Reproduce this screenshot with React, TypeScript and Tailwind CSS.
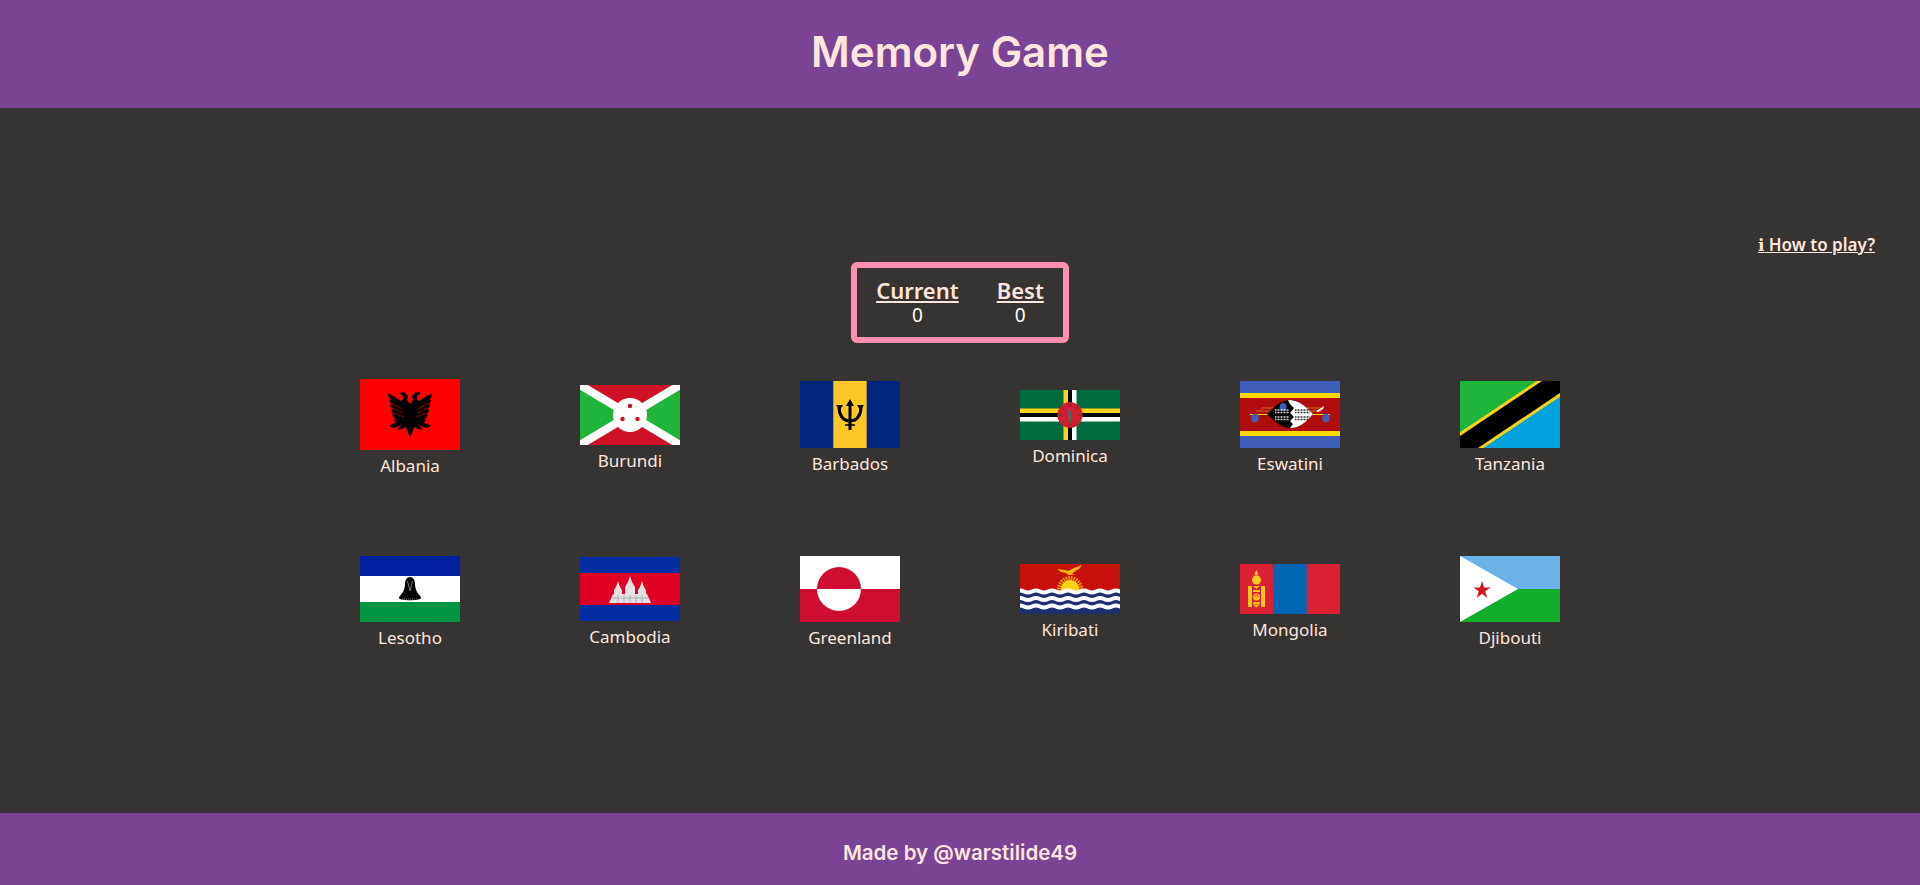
const titleFont = "font-['Inter',sans-serif]";

const eagleHalf =
  "M50 25L47 21L48 17L44 13L39 14L43 17L43 20L41 22L35 18L28 14L29 19L31 20L29 21L30 24L32 25L30 26L31 29L33 30L31 31L32 34L34 35L32 36L34 39L36 40L34 41L36 44L32 45L29 47L34 49L39 47L44 44L40 47L37 51L42 50L46 48L47 52L50 58Z";

function Albania() {
  return (
    <svg viewBox="0 0 100 71" className="block w-[100px] h-[71px]">
      <rect width="100" height="71" fill="#ff0000" />
      <path d={eagleHalf} fill="#000" />
      <path d={eagleHalf} fill="#000" transform="translate(100 0) scale(-1 1)" />
      <path
        d="M32 24L42 30M32 29L43 34M34 34L44 38M68 24L58 30M68 29L57 34M66 34L56 38"
        stroke="#c00000"
        strokeWidth=".8"
      />
    </svg>
  );
}

function Burundi() {
  return (
    <svg viewBox="0 0 100 60" className="block w-[100px] h-[60px]">
      <rect width="100" height="60" fill="#ce1126" />
      <path d="M0 0L50 30L0 60z" fill="#1eb53a" />
      <path d="M100 0L50 30L100 60z" fill="#1eb53a" />
      <path d="M0 0L100 60M100 0L0 60" stroke="#fff" strokeWidth="8" />
      <circle cx="50" cy="30" r="17" fill="#fff" />
      <circle cx="50" cy="21" r="2.200" fill="#ce1126" />
      <circle cx="42.500" cy="34" r="2.200" fill="#ce1126" />
      <circle cx="57.500" cy="34" r="2.200" fill="#ce1126" />
    </svg>
  );
}

function Barbados() {
  return (
    <svg viewBox="0 0 100 67" className="block w-[100px] h-[67px]">
      <rect width="100" height="67" fill="#00267f" />
      <rect x="33.300" width="33.400" height="67" fill="#ffc726" />
      <path d="M50 49V22" stroke="#000" strokeWidth="3" />
      <path d="M50 18l-4 7h8z" fill="#000" />
      <path d="M39 26C39 34 43 40 50 40C57 40 61 34 61 26" stroke="#000" strokeWidth="3" fill="none" />
      <path d="M36 24l7 0-3 5zM64 24l-7 0 3 5z" fill="#000" />
      <path d="M45 44h10" stroke="#000" strokeWidth="1.500" />
    </svg>
  );
}

function Dominica() {
  const dots = [
    [50, 15],
    [57, 18],
    [59.500, 25],
    [57, 32],
    [50, 35],
    [43, 32],
    [40.500, 25],
    [43, 18],
  ];
  return (
    <svg viewBox="0 0 100 50" className="block w-[100px] h-[50px]">
      <rect width="100" height="50" fill="#006b3f" />
      <rect y="18.500" width="100" height="4.500" fill="#fcd116" />
      <rect y="23" width="100" height="4" fill="#000" />
      <rect y="27" width="100" height="4.500" fill="#fff" />
      <rect x="43.500" width="4.500" height="50" fill="#fcd116" />
      <rect x="48" width="4" height="50" fill="#000" />
      <rect x="52" width="4.500" height="50" fill="#fff" />
      <ellipse cx="50" cy="25" rx="12.500" ry="13" fill="#d41c30" />
      <path d="M49 18c-1 3-1 8 0 11l1 0 0-11z" fill="#5a5ab0" />
      <path d="M50 20c2 3 2 9 1 13l-1 0z" fill="#2a7a40" />
      <g fill="#7a3a30">
        {dots.map(([cx, cy]) => (
          <circle key={`${cx}-${cy}`} cx={cx} cy={cy} r="1.300" />
        ))}
      </g>
    </svg>
  );
}

function Eswatini() {
  return (
    <svg viewBox="0 0 100 67" className="block w-[100px] h-[67px]">
      <rect width="100" height="67" fill="#3e5eb9" />
      <rect y="12" width="100" height="43" fill="#ffd900" />
      <rect y="17" width="100" height="33" fill="#b10c0c" />
      <path d="M10 33.500h80" stroke="#ffd900" strokeWidth="1" />
      <path d="M21 27h60M16 30h66" stroke="#d8700f" strokeWidth="1.200" />
      <path d="M27 33C35 25 42 19 50 19C60 19 66 26 73 33C66 41 60 47 50 47C42 47 35 41 27 33z" fill="#000" />
      <path d="M48 19C60 19 66 26 73 33C66 41 60 47 50 47L53 43L50 40L54 36L50 32L54 27L50 23z" fill="#fff" />
      <ellipse cx="43" cy="26" rx="3.500" ry="4" fill="#3e5eb9" />
      <path d="M35 29h14M35 31.500h14M35 36h14M35 38.500h14" stroke="#d8d8d8" strokeWidth="1.600" strokeDasharray="1 .5" />
      <path d="M55 29h15M55 31.500h15M55 36h15M55 38.500h15" stroke="#333" strokeWidth="1.600" strokeDasharray="1 .5" />
      <ellipse cx="15" cy="37" rx="3.800" ry="4.500" fill="#3e5eb9" />
      <ellipse cx="86" cy="37" rx="3.800" ry="4.500" fill="#3e5eb9" />
      <path d="M76 30l5-3 3-2-1 3-5 3z" fill="#fff" />
    </svg>
  );
}

function Tanzania() {
  return (
    <svg viewBox="0 0 100 67" className="block w-[100px] h-[67px]">
      <rect width="100" height="67" fill="#1eb53a" />
      <path d="M0 67L100 0V67z" fill="#00a3dd" />
      <path d="M-10 73.700L110 -6.700" stroke="#fcd116" strokeWidth="26" />
      <path d="M-10 73.700L110 -6.700" stroke="#000" strokeWidth="20" />
    </svg>
  );
}

function Lesotho() {
  return (
    <svg viewBox="0 0 100 66" className="block w-[100px] h-[66px]">
      <rect width="100" height="66" fill="#fff" />
      <rect width="100" height="20" fill="#00209f" />
      <rect y="46" width="100" height="20" fill="#009543" />
      <path d="M50 21c3 0 5 3 5 7 0 3 1 6 2 8 1 2 4 4 4 6 0 3-22 3-22 0 0-2 3-4 4-6 1-2 2-5 2-8 0-4 2-7 5-7z" fill="#000" />
      <path d="M47.500 25l2.500 10 2.500-10" stroke="#999" strokeWidth=".8" fill="none" />
      <path d="M42 43h16" stroke="#777" strokeWidth="1" strokeDasharray="1 1" />
    </svg>
  );
}

function Cambodia() {
  return (
    <svg viewBox="0 0 100 64" className="block w-[100px] h-[64px]">
      <rect width="100" height="64" fill="#032ea1" />
      <rect y="16" width="100" height="32" fill="#e00025" />
      <g fill="#e2e2e2">
        <path d="M38 24l2 6 2 3v5h-8v-5l2-3z" />
        <path d="M62 24l2 6 2 3v5h-8v-5l2-3z" />
        <path d="M50 19l2 6 3 5v8H45v-8l3-5z" />
        <path d="M33 37h34l4 9H29z" />
      </g>
      <path d="M38 38v8M50 38v8M62 38v8M44 38v8M56 38v8M32 41h36" stroke="#b0b0b0" strokeWidth="1" />
    </svg>
  );
}

function Greenland() {
  return (
    <svg viewBox="0 0 100 66" className="block w-[100px] h-[66px]">
      <rect width="100" height="33" fill="#fff" />
      <rect y="33" width="100" height="33" fill="#d00c33" />
      <path d="M17 33a22 22 0 0 1 44 0z" fill="#d00c33" />
      <path d="M17 33a22 22 0 0 0 44 0z" fill="#fff" />
    </svg>
  );
}

function Kiribati() {
  const waves = [27.500, 35, 42.500];
  return (
    <svg viewBox="0 0 100 50" className="block w-[100px] h-[50px]">
      <rect width="100" height="50" fill="#c8100b" />
      <circle cx="50" cy="25" r="10.500" fill="none" stroke="#f09a05" strokeWidth="5" strokeDasharray="1.500 1" />
      <circle cx="50" cy="25" r="9" fill="#fcd116" />
      <path d="M37 5l8 1 3 1 6-3 8-3-3 4-5 3-2 2 3 0-3 1-4 0-2-2-5-1z" fill="#f2b705" />
      <rect y="27" width="100" height="23" fill="#1d2f6f" />
      {waves.map((y) => (
        <path
          key={y}
          d={`M-4 ${y}q4-2 8 0t8 0 8 0 8 0 8 0 8 0 8 0 8 0 8 0 8 0 8 0 8 0 8 0 8 0`}
          stroke="#fff"
          strokeWidth="3.800"
          fill="none"
        />
      ))}
    </svg>
  );
}

function Mongolia() {
  return (
    <svg viewBox="0 0 100 50" className="block w-[100px] h-[50px]">
      <rect width="100" height="50" fill="#da2032" />
      <rect x="33.300" width="33.400" height="50" fill="#0066b3" />
      <g fill="#ffc61e">
        <path d="M16.500 6c1 2 1.800 3 1.800 5h-3.600c0-2 .8-3 1.800-5z" />
        <circle cx="16.500" cy="16" r="4.500" />
        <rect x="8" y="22" width="4" height="21" />
        <rect x="21" y="22" width="4" height="21" />
        <path d="M13 22h7l-3.500 3z" />
        <rect x="13" y="26" width="7" height="2" />
        <circle cx="16.500" cy="33" r="3.500" />
        <rect x="13" y="38" width="7" height="2" />
        <path d="M13 40.500h7l-3.500 3z" />
      </g>
      <path d="M14.500 33a2 2 0 0 1 4 0" stroke="#da2032" strokeWidth=".8" fill="none" />
    </svg>
  );
}

function Djibouti() {
  return (
    <svg viewBox="0 0 100 66" className="block w-[100px] h-[66px]">
      <rect width="100" height="33" fill="#6ab2e7" />
      <rect y="33" width="100" height="33" fill="#12ad2b" />
      <path d="M0 0L58 33L0 66z" fill="#fff" />
      <path d="M22 25l2 6.500h6.500l-5.300 3.800 2 6.500-5.200-4-5.200 4 2-6.500-5.300-3.800h6.500z" fill="#d7141a" />
    </svg>
  );
}

const flags = [
  { name: "Albania", Flag: Albania },
  { name: "Burundi", Flag: Burundi },
  { name: "Barbados", Flag: Barbados },
  { name: "Dominica", Flag: Dominica },
  { name: "Eswatini", Flag: Eswatini },
  { name: "Tanzania", Flag: Tanzania },
  { name: "Lesotho", Flag: Lesotho },
  { name: "Cambodia", Flag: Cambodia },
  { name: "Greenland", Flag: Greenland },
  { name: "Kiribati", Flag: Kiribati },
  { name: "Mongolia", Flag: Mongolia },
  { name: "Djibouti", Flag: Djibouti },
];

export default function App() {
  return (
    <div className="flex flex-col h-[885px] bg-[#353432] text-[#ffe5dc] font-['Noto_Sans',sans-serif]">
      <header className={`flex items-center justify-center h-[108px] pb-[5px] bg-[#7a4394] ${titleFont}`}>
        <h1 className="text-[42px] font-semibold">Memory Game</h1>
      </header>

      <main className="flex-1 flex flex-col pt-[124px]">
        <a className="self-end mr-[45px] h-[30px] text-[17px] font-semibold underline">
          <span className="font-['DejaVu_Sans',sans-serif]">ℹ</span> How to play?
        </a>

        <div className="self-center flex gap-[38px] px-[19px] pt-[1px] h-[81px] items-center border-[6px] border-[#ff8fb1] rounded-md">
          <div className="flex flex-col items-center">
            <span className="text-[22px] leading-[24px] font-semibold underline">Current</span>
            <span className="text-[19px] leading-[26px] text-white">0</span>
          </div>
          <div className="flex flex-col items-center">
            <span className="text-[22px] leading-[24px] font-semibold underline">Best</span>
            <span className="text-[19px] leading-[26px] text-white">0</span>
          </div>
        </div>

        <div className="self-center grid grid-cols-6 gap-x-[120px] gap-y-[77px] mt-[36px] items-center">
          {flags.map(({ name, Flag }) => (
            <div key={name} className="flex flex-col items-center w-[100px]">
              <Flag />
              <span className="mt-[3px] text-[17px] leading-[26px]">{name}</span>
            </div>
          ))}
        </div>
      </main>

      <footer className={`flex items-center justify-center h-[72px] pt-[9px] bg-[#7a4394] ${titleFont}`}>
        <p className="text-[20.500px] font-semibold">Made by @warstilide49</p>
      </footer>
    </div>
  );
}
